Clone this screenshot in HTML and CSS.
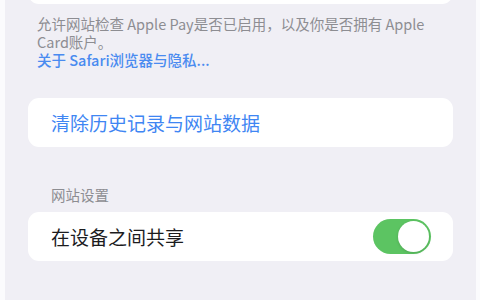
FILE: index.html
```html
<!DOCTYPE html>
<html lang="zh-CN">
<head>
<meta charset="utf-8">
<link rel="stylesheet" href="styles.css">
</head>
<body>
<div class="screen">
  <div class="card card-top"></div>
  <div class="footnote">
    <p class="desc">允许网站检查 Apple Pay是否已启用，以及你是否拥有 Apple Card账户。</p>
    <a class="link">关于 Safari浏览器与隐私...</a>
  </div>
  <div class="card row action">清除历史记录与网站数据</div>
  <div class="header">网站设置</div>
  <div class="card row">
    <span class="label">在设备之间共享</span>
    <span class="toggle"><span class="knob"></span></span>
  </div>
</div>
</body>
</html>
```
FILE: styles.css
```css
html, body {
  margin: 0;
  padding: 0;
  background: #fbfbfd;
  height: 100%;
}
.screen {
  margin: 0 4px 0 5px;
  height: 300px;
  background: #f0eff5;
  overflow: hidden;
  display: flex;
  flex-direction: column;
  font-family: "Noto Sans CJK SC", "Noto Sans", sans-serif;
}
.card {
  background: #ffffff;
  margin: 0 23px 0 23px;
  border-radius: 11px;
}
.card-top {
  height: 44px;
  margin-top: -40px;
  flex: none;
}
.footnote {
  padding: 11px 30px 0 32px;
  font-size: 14.5px;
  line-height: 18px;
  color: #8d8d92;
}
.desc {
  margin: 0;
}
.link {
  display: block;
  color: #4a8bf0;
  font-size: 14.5px;
  font-weight: 500;
}
.row {
  height: 49px;
  display: flex;
  align-items: center;
  padding: 0 22px 0 23px;
  font-size: 19px;
  flex: none;
}
.action {
  margin-top: 29px;
  color: #3f86f3;
}
.header {
  margin-top: 39px;
  padding-left: 46px;
  font-size: 14.5px;
  line-height: 18px;
  color: #8d8d92;
  height: 26px;
}
.label {
  color: #1c1c1e;
  flex: 1;
}
.toggle {
  width: 58px;
  height: 35px;
  border-radius: 18px;
  background: #5cc462;
  position: relative;
}
.knob {
  position: absolute;
  right: 2px;
  top: 2px;
  width: 31px;
  height: 31px;
  border-radius: 50%;
  background: #ffffff;
  box-shadow: 0 1px 3px rgba(0,0,0,0.15);
}
```
